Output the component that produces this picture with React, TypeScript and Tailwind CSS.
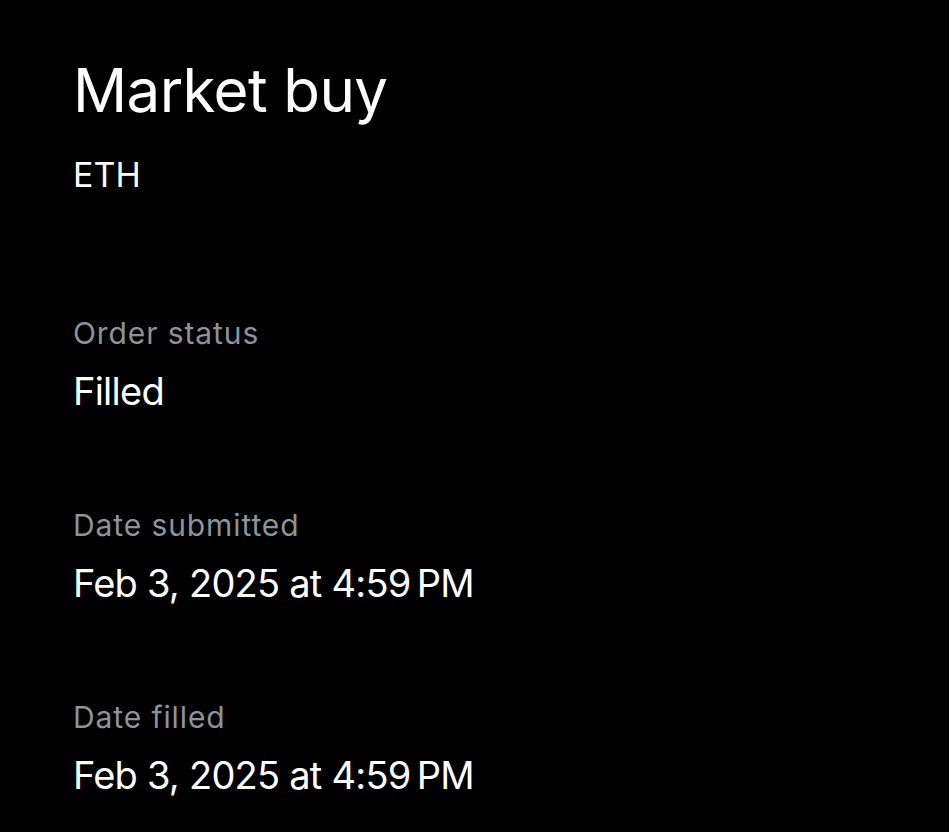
import React from 'react';

const rows = [
    { label: 'Order status', value: 'Filled' },
    { label: 'Date submitted', value: 'Feb 3, 2025 at 4:59\u202FPM' },
    { label: 'Date filled', value: 'Feb 3, 2025 at 4:59\u202FPM' },
];

const App: React.FC = () => {
    return (
        <div className="min-h-screen w-full bg-black text-white pl-[73px] pt-[54px]" style={{ fontFamily: 'Inter, "Noto Sans", sans-serif' }}>
            <h1 className="text-[60px] leading-[72px] font-normal tracking-[-0.01em]">Market buy</h1>
            <p className="mt-[29px] text-[34px] leading-[40px]">ETH</p>

            <div className="mt-[121px] flex flex-col gap-[94px]">
                {rows.map((row) => (
                    <div key={row.label} className="flex flex-col gap-[18px]">
                        <span className="text-[30px] leading-[34px] tracking-[0.03em] text-[#8c949b]">{row.label}</span>
                        <span className="text-[38px] leading-[46px] tracking-[-0.02em]">{row.value}</span>
                    </div>
                ))}
            </div>
        </div>
    );
};

export default App;
